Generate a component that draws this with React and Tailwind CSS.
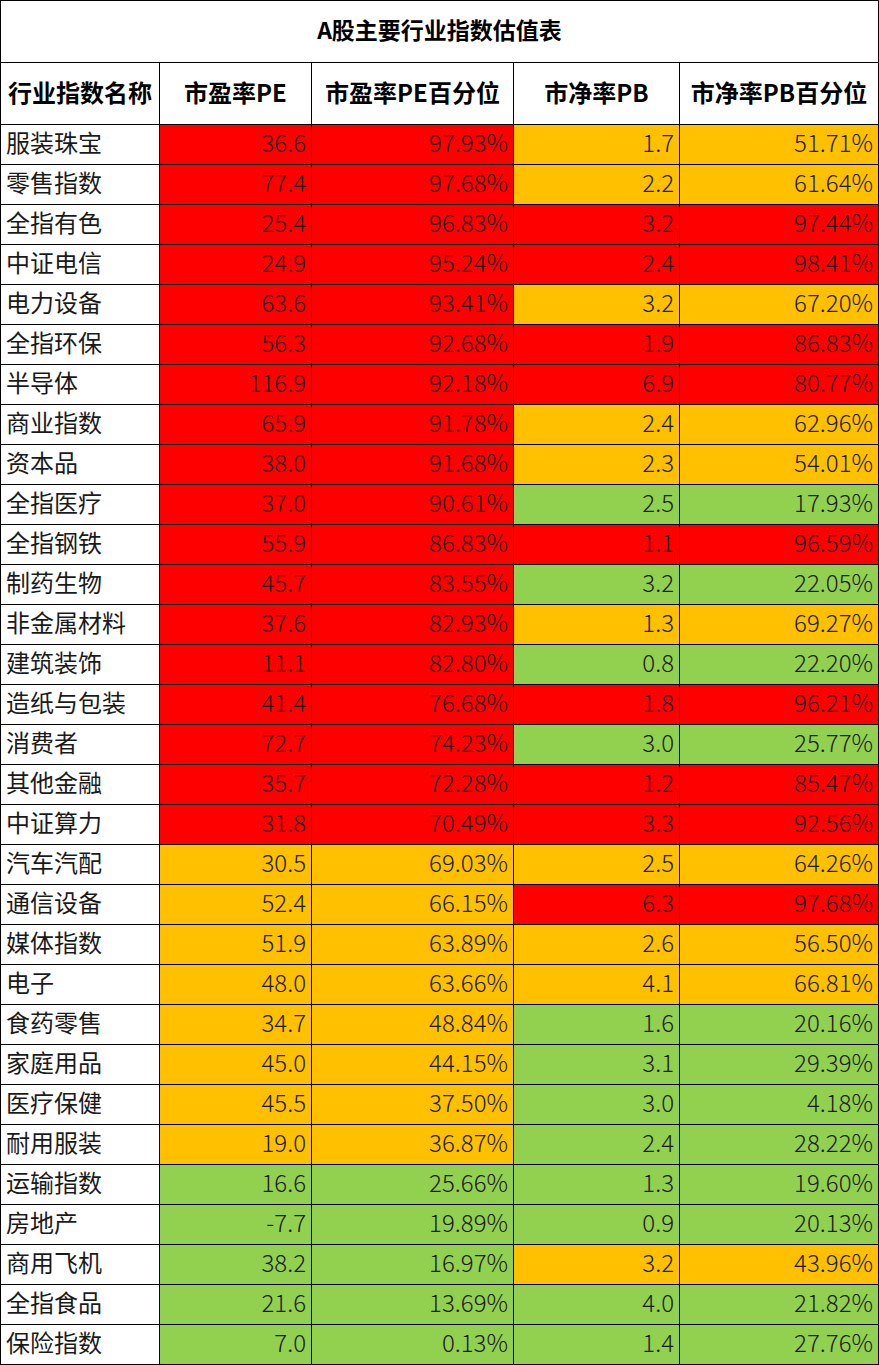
import React from 'react';

const R = 'bg-[#ff0000]';
const O = 'bg-[#ffc000]';
const G = 'bg-[#92d050]';

// name, pe, pePct, peColor, pb, pbPct, pbColor
const rows = [
  ['服装珠宝', '36.6', '97.93%', R, '1.7', '51.71%', O],
  ['零售指数', '77.4', '97.68%', R, '2.2', '61.64%', O],
  ['全指有色', '25.4', '96.83%', R, '3.2', '97.44%', R],
  ['中证电信', '24.9', '95.24%', R, '2.4', '98.41%', R],
  ['电力设备', '63.6', '93.41%', R, '3.2', '67.20%', O],
  ['全指环保', '56.3', '92.68%', R, '1.9', '86.83%', R],
  ['半导体', '116.9', '92.18%', R, '6.9', '80.77%', R],
  ['商业指数', '65.9', '91.78%', R, '2.4', '62.96%', O],
  ['资本品', '38.0', '91.68%', R, '2.3', '54.01%', O],
  ['全指医疗', '37.0', '90.61%', R, '2.5', '17.93%', G],
  ['全指钢铁', '55.9', '86.83%', R, '1.1', '96.59%', R],
  ['制药生物', '45.7', '83.55%', R, '3.2', '22.05%', G],
  ['非金属材料', '37.6', '82.93%', R, '1.3', '69.27%', O],
  ['建筑装饰', '11.1', '82.80%', R, '0.8', '22.20%', G],
  ['造纸与包装', '41.4', '76.68%', R, '1.8', '96.21%', R],
  ['消费者', '72.7', '74.23%', R, '3.0', '25.77%', G],
  ['其他金融', '35.7', '72.28%', R, '1.2', '85.47%', R],
  ['中证算力', '31.8', '70.49%', R, '3.3', '92.56%', R],
  ['汽车汽配', '30.5', '69.03%', O, '2.5', '64.26%', O],
  ['通信设备', '52.4', '66.15%', O, '6.3', '97.68%', R],
  ['媒体指数', '51.9', '63.89%', O, '2.6', '56.50%', O],
  ['电子', '48.0', '63.66%', O, '4.1', '66.81%', O],
  ['食药零售', '34.7', '48.84%', O, '1.6', '20.16%', G],
  ['家庭用品', '45.0', '44.15%', O, '3.1', '29.39%', G],
  ['医疗保健', '45.5', '37.50%', O, '3.0', '4.18%', G],
  ['耐用服装', '19.0', '36.87%', O, '2.4', '28.22%', G],
  ['运输指数', '16.6', '25.66%', G, '1.3', '19.60%', G],
  ['房地产', '-7.7', '19.89%', G, '0.9', '20.13%', G],
  ['商用飞机', '38.2', '16.97%', G, '3.2', '43.96%', O],
  ['全指食品', '21.6', '13.69%', G, '4.0', '21.82%', G],
  ['保险指数', '7.0', '0.13%', G, '1.4', '27.76%', G],
];

const headers = ['行业指数名称', '市盈率PE', '市盈率PE百分位', '市净率PB', '市净率PB百分位'];

const Num = ({ value, color }) => (
  <div className={`${color} h-[39px] flex items-center justify-end pr-[5px] pb-[5px] text-[24px] font-light text-[#1a1a1a]`}>
    {value}
  </div>
);

export default function App() {
  return (
    <div
      className="w-[879px] bg-white"
      style={{ fontFamily: '"Noto Sans CJK SC", "Noto Sans", sans-serif' }}
    >
      <div className="grid grid-cols-[158px_151px_201px_165px_198px] gap-px bg-black p-px">
        {/* 标题 */}
        <div className="col-span-5 h-[61px] bg-white flex items-center justify-center pb-[4px] text-[23px] font-bold text-black">
          A股主要行业指数估值表
        </div>

        {/* 表头 */}
        {headers.map((h) => (
          <div
            key={h}
            className="h-[61px] bg-white flex items-center justify-center pb-[4px] text-[24px] font-bold text-black"
          >
            {h}
          </div>
        ))}

        {/* 数据 */}
        {rows.map(([name, pe, pePct, peColor, pb, pbPct, pbColor]) => (
          <React.Fragment key={name}>
            <div className="h-[39px] bg-white flex items-center pl-[5px] pb-[5px] text-[24px] text-[#1a1a1a]">
              {name}
            </div>
            <Num value={pe} color={peColor} />
            <Num value={pePct} color={peColor} />
            <Num value={pb} color={pbColor} />
            <Num value={pbPct} color={pbColor} />
          </React.Fragment>
        ))}
      </div>
    </div>
  );
}
